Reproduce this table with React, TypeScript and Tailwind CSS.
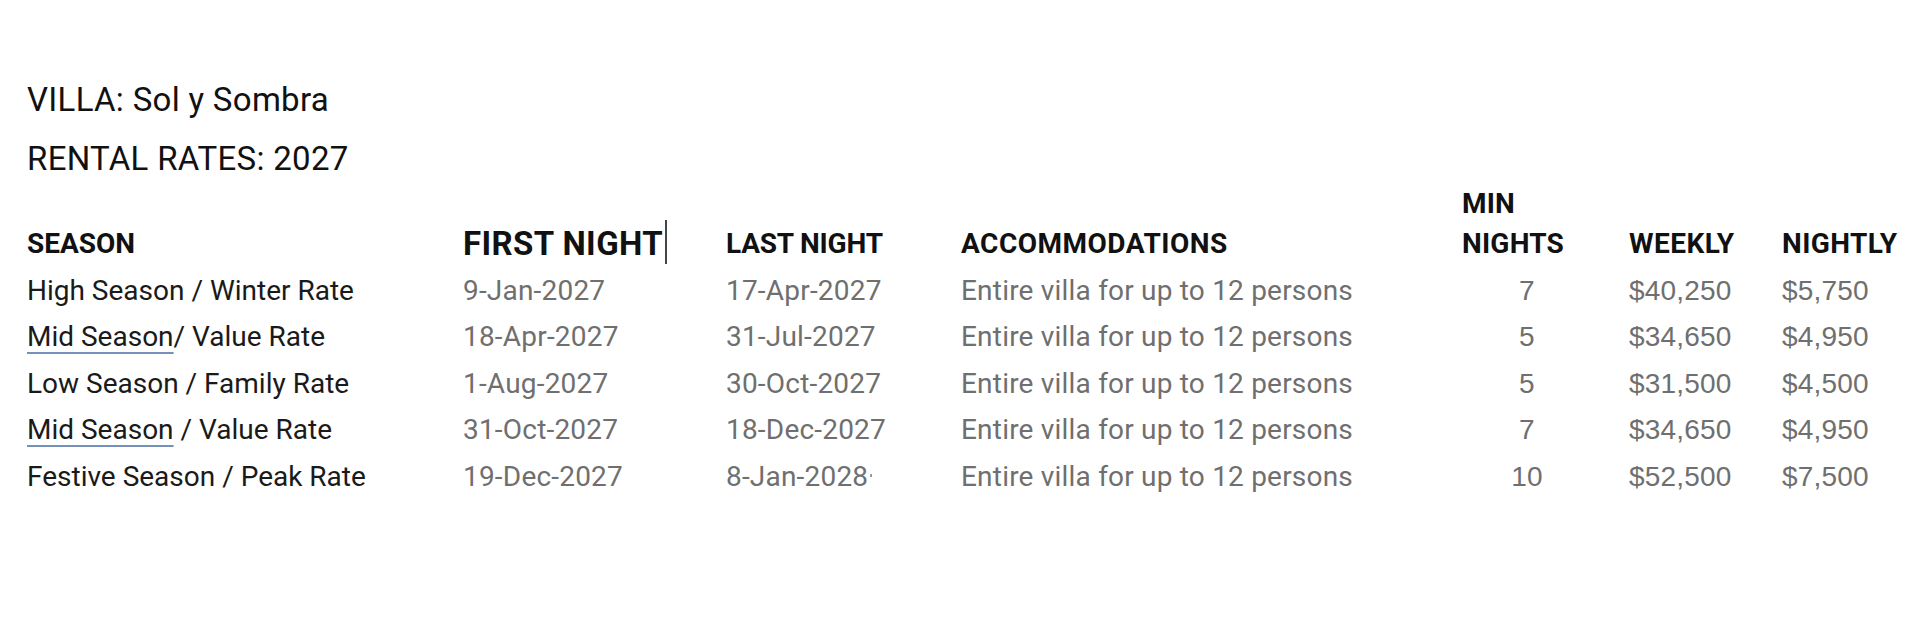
import React from 'react';

type Rate = {
  season: string;
  rest?: string;
  underline?: boolean;
  first: string;
  last: string;
  min: string;
  weekly: string;
  nightly: string;
  mark?: boolean;
};

const rates: Rate[] = [
  { season: 'High Season / Winter Rate', first: '9-Jan-2027', last: '17-Apr-2027', min: '7', weekly: '$40,250', nightly: '$5,750' },
  { season: 'Mid Season', rest: '/ Value Rate', underline: true, first: '18-Apr-2027', last: '31-Jul-2027', min: '5', weekly: '$34,650', nightly: '$4,950' },
  { season: 'Low Season / Family Rate', first: '1-Aug-2027', last: '30-Oct-2027', min: '5', weekly: '$31,500', nightly: '$4,500' },
  { season: 'Mid Season', rest: ' / Value Rate', underline: true, first: '31-Oct-2027', last: '18-Dec-2027', min: '7', weekly: '$34,650', nightly: '$4,950' },
  { season: 'Festive Season / Peak Rate', first: '19-Dec-2027', last: '8-Jan-2028', mark: true, min: '10', weekly: '$52,500', nightly: '$7,500' },
];

const head = "self-end pb-[4px] leading-[40px] text-[28px] font-bold text-[#111] whitespace-nowrap";
const cell = "h-[46.5px] leading-[46.5px] text-[28px] whitespace-nowrap";
const gray = "text-[#6f6f6f] tracking-[0.2px]";
const arial = "font-['Liberation_Sans',Arial,sans-serif]";

export default function App() {
  return (
    <div className="min-h-screen bg-white pl-[27px] pt-[80px] font-['Roboto',sans-serif] text-[#111]">
      {/* titel */}
      <div className="flex flex-col gap-[19px] text-[33px] leading-[40px] tracking-[0.3px]">
        <div>VILLA: Sol y Sombra</div>
        <div>RENTAL RATES: 2027</div>
      </div>

      <div className="mt-[4.5px] grid grid-cols-[436px_263px_235px_501px_167px_153px_1fr]">
        <div className={head}>SEASON</div>
        <div className="self-end pb-[4px] leading-[40px] text-[33px] font-bold tracking-[0.4px] text-[#111] whitespace-nowrap">
          FIRST NIGHT
          <span className="ml-[2px] inline-block h-[44px] w-[2px] bg-[#444] align-[-9px]"></span>
        </div>
        <div className={`${head} tracking-[-0.2px]`}>LAST NIGHT</div>
        <div className={`${head} tracking-[0.5px]`}>ACCOMMODATIONS</div>
        <div className={`${head} tracking-[0.2px]`}>
          <div>MIN</div>
          <div>NIGHTS</div>
        </div>
        <div className={`${head} tracking-[0.5px]`}>WEEKLY</div>
        <div className={`${head} tracking-[0.4px]`}>NIGHTLY</div>

        {rates.map((r, i) => (
          <React.Fragment key={i}>
            <div className={`${cell} text-[#1a1a1a]`}>
              {r.underline ? (
                <>
                  <span className="underline decoration-[#7391bb] decoration-2 underline-offset-[6px]">{r.season}</span>
                  {r.rest}
                </>
              ) : (
                r.season
              )}
            </div>
            <div className={`${cell} ${gray}`}>{r.first}</div>
            <div className={`${cell} ${gray}`}>
              {r.last}
              {r.mark && <span className="ml-[2px] inline-block h-[3px] w-[2px] bg-[#9a9a9a] align-[9px]"></span>}
            </div>
            <div className={`${cell} ${gray}`}>Entire villa for up to 12 persons</div>
            <div className={`${cell} ${gray} ${arial}`}>
              <div className="w-[130px] text-center">{r.min}</div>
            </div>
            <div className={`${cell} ${gray} ${arial}`}>{r.weekly}</div>
            <div className={`${cell} ${gray} ${arial}`}>{r.nightly}</div>
          </React.Fragment>
        ))}
      </div>
    </div>
  );
}
